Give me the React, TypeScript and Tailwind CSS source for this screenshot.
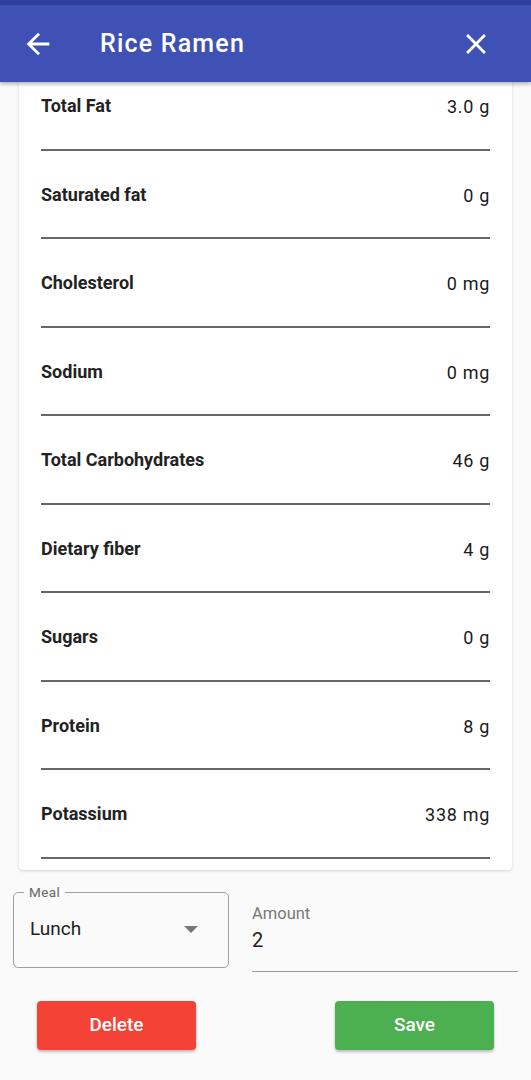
import React from "react"

const rows = [
  { label: "Total Fat", value: "3.0 g" },
  { label: "Saturated fat", value: "0 g" },
  { label: "Cholesterol", value: "0 mg" },
  { label: "Sodium", value: "0 mg" },
  { label: "Total Carbohydrates", value: "46 g" },
  { label: "Dietary fiber", value: "4 g" },
  { label: "Sugars", value: "0 g" },
  { label: "Protein", value: "8 g" },
  { label: "Potassium", value: "338 mg" },
]

export default function App() {
  return (
    <div className="min-h-[1080px] bg-[#fafafa] font-['Roboto',sans-serif] overflow-hidden">
      {/* status bar strip + app bar */}
      <div className="relative z-10">
        <div className="h-[5px] bg-[#303f9f]" />
        <div className="h-[77px] bg-[#3f51b5] flex items-center pl-[21px] pr-[21px] text-white shadow-[0_2px_4px_rgba(0,0,0,0.3)]">
          <svg width="34" height="34" viewBox="0 0 24 24" className="shrink-0">
            <path d="M20 11H7.83l5.59-5.59L12 4l-8 8 8 8 1.41-1.41L7.83 13H20v-2z" fill="white" />
          </svg>
          <span className="ml-[45px] text-[25px] tracking-[1.2px] font-medium leading-none">Rice Ramen</span>
          <svg width="34" height="34" viewBox="0 0 24 24" className="ml-auto mr-[17px] shrink-0">
            <path d="M19 6.41L17.59 5 12 10.59 6.41 5 5 6.41 10.59 12 5 17.59 6.41 19 12 13.41 17.59 19 19 17.59 13.41 12z" fill="white" />
          </svg>
        </div>
      </div>

      {/* nutrition card, scrolled under the app bar */}
      <div className="mx-[19px] -mt-[20px] bg-white rounded-[4px] shadow-[0_1px_3px_rgba(0,0,0,0.15)] px-[22px] pb-[11px]">
        {rows.map((r) => (
          <div key={r.label} className="h-[88.5px] flex flex-col">
            <div className="flex items-baseline justify-between pt-[33px]">
              <span className="text-[18px] font-bold text-[#222] leading-[22px]">{r.label}</span>
              <span className="text-[18px] tracking-[0.7px] text-[#1a1a1a] leading-[22px] translate-y-[1px]">{r.value}</span>
            </div>
            <div className="mt-auto h-[2px] bg-[#666]" />
          </div>
        ))}
      </div>

      {/* meal + amount */}
      <div className="flex items-start pl-[13px] pr-[13px] mt-[22px]">
        <div className="relative w-[216px] h-[76px] border border-[#a0a0a0] rounded-[5px] flex items-center px-[16px]">
          <span className="absolute -top-[9px] left-[10px] bg-[#fafafa] px-[5px] text-[13.5px] tracking-[0.4px] text-[#666] leading-[16px]">Meal</span>
          <span className="text-[19px] text-[#222]">Lunch</span>
          <svg width="14" height="8" viewBox="0 0 14 8" className="ml-auto mr-[14px]">
            <path d="M0 0h14L7 7z" fill="#777" />
          </svg>
        </div>
        <div className="ml-[23px] flex-1 pt-[13px]">
          <div className="text-[16.5px] text-[#777] leading-[18px]">Amount</div>
          <div className="text-[20px] text-[#222] leading-[24px] mt-[5px]">2</div>
          <div className="mt-[19px] h-[1.5px] bg-[#9a9a9a]" />
        </div>
      </div>

      {/* actions */}
      <div className="flex justify-between px-[37px] mt-[29px]">
        <button className="w-[159px] h-[49px] rounded-[4px] bg-[#f44336] text-white text-[19px] font-medium shadow-[0_2px_3px_rgba(0,0,0,0.25)]">
          Delete
        </button>
        <button className="w-[159px] h-[49px] rounded-[4px] bg-[#4caf50] text-white text-[19px] font-medium shadow-[0_2px_3px_rgba(0,0,0,0.25)]">
          Save
        </button>
      </div>
    </div>
  )
}
